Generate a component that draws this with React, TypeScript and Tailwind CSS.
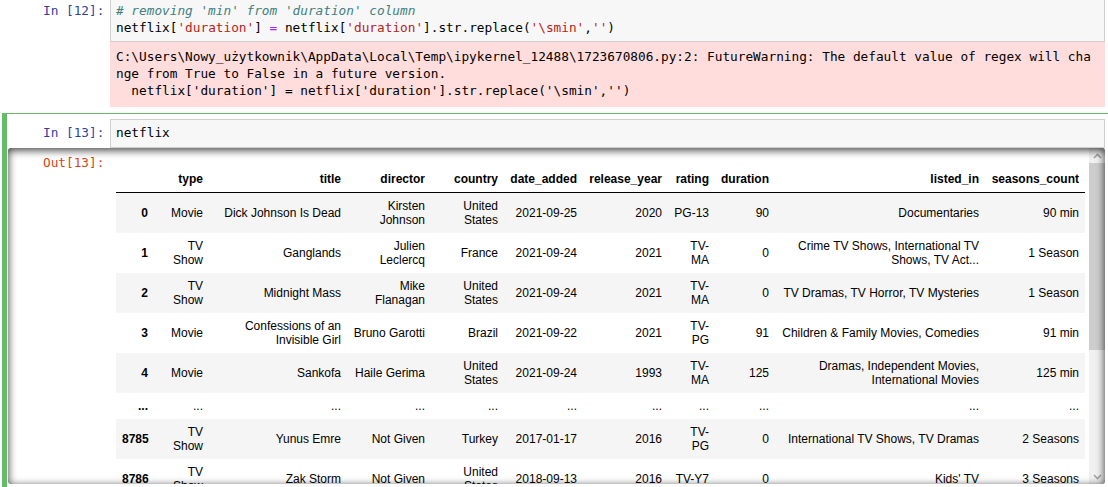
import React from "react";

type Row = { idx: string; cells: string[] };

const rows: Row[] = [
  { idx: "0", cells: ["Movie", "Dick Johnson Is Dead", "Kirsten Johnson", "United States", "2021-09-25", "2020", "PG-13", "90", "Documentaries", "90 min"] },
  { idx: "1", cells: ["TV Show", "Ganglands", "Julien Leclercq", "France", "2021-09-24", "2021", "TV-MA", "0", "Crime TV Shows, International TV Shows, TV Act...", "1 Season"] },
  { idx: "2", cells: ["TV Show", "Midnight Mass", "Mike Flanagan", "United States", "2021-09-24", "2021", "TV-MA", "0", "TV Dramas, TV Horror, TV Mysteries", "1 Season"] },
  { idx: "3", cells: ["Movie", "Confessions of an Invisible Girl", "Bruno Garotti", "Brazil", "2021-09-22", "2021", "TV-PG", "91", "Children & Family Movies, Comedies", "91 min"] },
  { idx: "4", cells: ["Movie", "Sankofa", "Haile Gerima", "United States", "2021-09-24", "1993", "TV-MA", "125", "Dramas, Independent Movies, International Movies", "125 min"] },
  { idx: "...", cells: ["...", "...", "...", "...", "...", "...", "...", "...", "...", "..."] },
  { idx: "8785", cells: ["TV Show", "Yunus Emre", "Not Given", "Turkey", "2017-01-17", "2016", "TV-PG", "0", "International TV Shows, TV Dramas", "2 Seasons"] },
  { idx: "8786", cells: ["TV Show", "Zak Storm", "Not Given", "United States", "2018-09-13", "2016", "TV-Y7", "0", "Kids' TV", "3 Seasons"] },
];

const headers = ["type", "title", "director", "country", "date_added", "release_year", "rating", "duration", "listed_in", "seasons_count"];

function S({ children }: { children: React.ReactNode }) {
  return <span className="text-[#ba2121]">{children}</span>;
}

function Chevron({ up }: { up: boolean }) {
  return (
    <svg width="9" height="6" viewBox="0 0 9 6">
      <polyline
        points={up ? "1,5 4.5,1.5 8,5" : "1,1 4.5,4.5 8,1"}
        fill="none"
        stroke="#a3a3a3"
        strokeWidth="1.6"
      />
    </svg>
  );
}

export default function App() {
  const mono = "font-['DejaVu_Sans_Mono',monospace] text-[12.75px] leading-[17px]";
  return (
    <div className="w-[1108px] h-[487px] overflow-hidden bg-white text-black">
      {/* Cell 12 */}
      <div className="ml-[2px] w-[1109px] border-x border-b border-transparent px-[5px] pb-[5px]">
        <div className="flex">
          <div className={`w-[102px] shrink-0 pt-[2px] pr-[5.6px] text-right text-[#303f9f] whitespace-pre ${mono}`}>In [12]:</div>
          <div className={`flex-1 bg-[#f7f7f7] border-x border-b border-[#cfcfcf] pl-[5px] pt-[2px] pb-[5px] whitespace-pre ${mono}`}>
            <div className="italic text-[#408080]"># removing 'min' from 'duration' column</div>
            <div>
              netflix[<S>'duration'</S>] <span className="text-[#aa22ff]">=</span> netflix[<S>'duration'</S>].str.replace(<S>{"'\\smin'"}</S>,<S>''</S>)
            </div>
          </div>
        </div>
        <div className="flex">
          <div className="w-[102px] shrink-0" />
          <div className={`flex-1 bg-[#ffdddd] pl-[6px] pt-[6px] pb-[8px] whitespace-pre ${mono}`}>
            <div>{"C:\\Users\\Nowy_użytkownik\\AppData\\Local\\Temp\\ipykernel_12488\\1723670806.py:2: FutureWarning: The default value of regex will cha"}</div>
            <div>nge from True to False in a future version.</div>
            <div>{"  netflix['duration'] = netflix['duration'].str.replace('\\smin','')"}</div>
          </div>
        </div>
      </div>

      {/* Cell 13 (selected) */}
      <div className="ml-[2px] w-[1109px] border border-l-[5px] border-[#66bb6a] pl-[1px] pr-[5px] pt-[5px]">
        <div className="flex">
          <div className={`w-[102px] shrink-0 pt-[5px] pr-[5.6px] text-right text-[#303f9f] whitespace-pre ${mono}`}>In [13]:</div>
          <div className={`flex-1 bg-[#f7f7f7] border border-[#cfcfcf] pl-[5px] pt-[4px] pb-[6px] ${mono}`}>netflix</div>
        </div>

        <div className="relative flex h-[336px] rounded-[2px] overflow-hidden">
          <div className="flex flex-1 overflow-hidden">
            <div className={`w-[102px] shrink-0 pt-[6px] pr-[5.6px] text-right text-[#d84315] whitespace-pre ${mono}`}>Out[13]:</div>
            <div className="pl-[6px] pt-[18px]">
              <table className="table-fixed w-[969px] border-collapse font-['Liberation_Sans',Arial,sans-serif] text-[12px] leading-[14px] text-black">
                <colgroup>
                  <col className="w-[38px]" />
                  <col className="w-[55px]" />
                  <col className="w-[138px]" />
                  <col className="w-[84px]" />
                  <col className="w-[73px]" />
                  <col className="w-[79px]" />
                  <col className="w-[85px]" />
                  <col className="w-[47px]" />
                  <col className="w-[60px]" />
                  <col className="w-[210px]" />
                  <col className="w-[100px]" />
                </colgroup>
                <thead>
                  <tr className="border-b border-black">
                    <th className="px-[6px] py-[6px]" />
                    {headers.map((h) => (
                      <th key={h} className="px-[6px] py-[6px] text-right align-middle font-bold">
                        {h}
                      </th>
                    ))}
                  </tr>
                </thead>
                <tbody>
                  {rows.map((r, i) => (
                    <tr key={r.idx} className={i % 2 === 0 ? "bg-[#f5f5f5]" : "bg-white"}>
                      <th className="px-[6px] py-[6px] text-right align-middle font-bold">{r.idx}</th>
                      {r.cells.map((c, j) => (
                        <td key={j} className="px-[6px] py-[6px] text-right align-middle font-normal">
                          {c}
                        </td>
                      ))}
                    </tr>
                  ))}
                </tbody>
              </table>
            </div>
          </div>

          {/* scrollbar */}
          <div className="w-[16px] shrink-0 flex flex-col bg-[#f0f0f0]">
            <div className="h-[15px] flex items-center justify-center">
              <Chevron up />
            </div>
            <div className="flex-1">
              <div className="h-[187px] bg-[#cdcdcd]" />
            </div>
            <div className="h-[15px] flex items-center justify-center">
              <Chevron up={false} />
            </div>
          </div>

          {/* inset shadow overlay */}
          <div className="pointer-events-none absolute inset-0 rounded-[2px] shadow-[inset_0_2px_8px_rgba(0,0,0,0.8)]" />
        </div>
        <div className="h-[10px]" />
      </div>
    </div>
  );
}
